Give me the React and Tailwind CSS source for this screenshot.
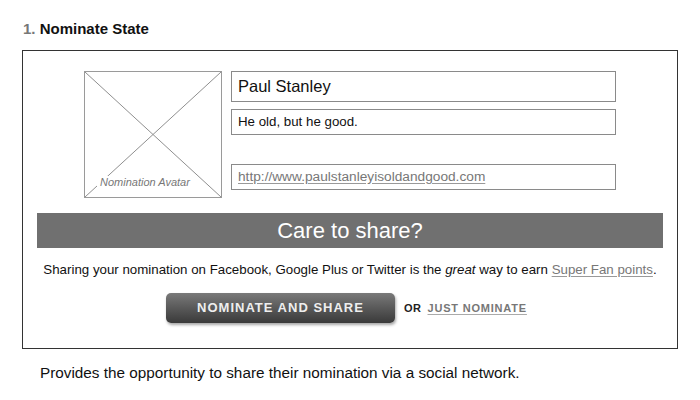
import React from 'react';

function AvatarPlaceholder() {
  return (
    <div className="relative w-[138px] h-[127px] border border-[#9a9a9a] shrink-0">
      <svg className="absolute inset-0 w-full h-full" viewBox="0 0 136 125" preserveAspectRatio="none">
        <line x1="0" y1="0" x2="136" y2="125" stroke="#8f8f8f" strokeWidth="1" />
        <line x1="136" y1="0" x2="0" y2="125" stroke="#8f8f8f" strokeWidth="1" />
      </svg>
      <div className="absolute left-[12px] bottom-[4px]">
        <span className="bg-white px-[3px] text-[11px] italic text-[#777] leading-[14px]">Nomination Avatar</span>
      </div>
    </div>
  );
}

export default function App() {
  return (
    <div className="w-[700px] h-[400px] bg-white text-[#111] font-['Liberation_Sans',Arial,sans-serif] overflow-hidden">
      <h1 className="pl-[23px] pt-[20px] text-[15px] font-bold leading-[18px]">
        <span className="text-[#777]">1.</span> Nominate State
      </h1>

      <div className="mt-[12px] ml-[22px] w-[656px] h-[299px] border-[1.5px] border-[#333]">
        <div className="flex gap-[9px] pt-[20px] pl-[61px]">
          <AvatarPlaceholder />
          <div className="flex flex-col w-[385px]">
            <div className="h-[31px] border border-[#8a8a8a] px-[6px] flex items-center text-[16.5px] leading-none">
              Paul Stanley
            </div>
            <div className="mt-[7px] h-[26px] border border-[#8a8a8a] px-[6px] flex items-center text-[13.3px]">
              He old, but he good.
            </div>
            <div className="mt-[29px] h-[26px] border border-[#8a8a8a] px-[6px] flex items-center text-[13.7px]">
              <span className="text-[#777] underline underline-offset-2 decoration-[#999]">http://www.paulstanleyisoldandgood.com</span>
            </div>
          </div>
        </div>

        <div className="mx-[14px] mt-[15px] h-[35px] bg-[#707070] flex items-center justify-center text-white text-[22px] leading-none">
          Care to share?
        </div>

        <p className="mt-[12px] text-center text-[13.3px] text-[#111]">
          Sharing your nomination on Facebook, Google Plus or Twitter is the <em>great</em> way to earn{' '}
          <span className="text-[#777] underline underline-offset-2 decoration-[#999]">Super Fan points</span>.
        </p>

        <div className="mt-[13px] flex items-center pl-[143px]">
          <button className="w-[229px] h-[30px] rounded-[5px] bg-gradient-to-b from-[#7a7a7a] to-[#3a3a3a] shadow-[1px_2px_3px_rgba(0,0,0,0.35)] text-[#eee] text-[13px] font-bold tracking-[1px]">
            NOMINATE AND SHARE
          </button>
          <span className="ml-[9px] text-[11px] font-bold tracking-[0.5px] text-[#222]">OR</span>
          <span className="ml-[6px] text-[11px] font-bold tracking-[0.8px] text-[#777] underline underline-offset-2 decoration-[#aaa]">JUST NOMINATE</span>
        </div>
      </div>

      <p className="mt-[13px] pl-[40px] text-[15.3px] text-[#111]">
        Provides the opportunity to share their nomination via a social network.
      </p>
    </div>
  );
}
